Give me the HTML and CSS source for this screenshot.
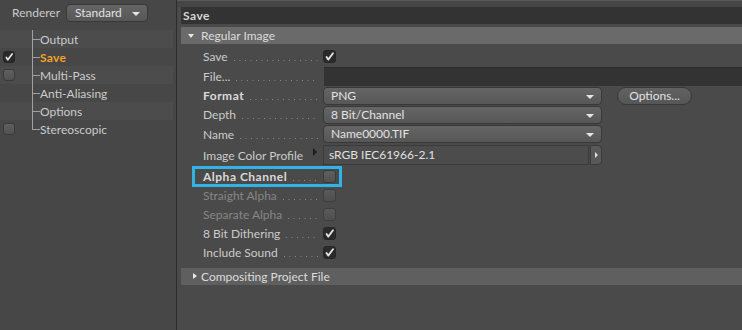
FILE: index.html
```html
<!DOCTYPE html>
<html lang="en">
<head>
    <meta charset="UTF-8">
    <title>Render Settings - Save</title>
    <link rel="stylesheet" href="styles.css">
</head>
<body>
    <div class="app">
        <aside class="sidebar">
            <div class="renderer">
                <span class="renderer-label">Renderer</span>
                <div class="select select-small">Standard</div>
            </div>
            <ul class="tree">
                <li class="tree-row alt"><span class="cb-cell"></span><span class="branch"></span><span class="tree-label">Output</span></li>
                <li class="tree-row"><span class="cb-cell"><span class="check on"><svg viewBox="0 0 12 12"><path d="M2.8 6.6 L4.6 9.4 L9.8 2.4"/></svg></span></span><span class="branch"></span><span class="tree-label active">Save</span></li>
                <li class="tree-row alt"><span class="cb-cell"><span class="check"></span></span><span class="branch"></span><span class="tree-label">Multi-Pass</span></li>
                <li class="tree-row"><span class="cb-cell"></span><span class="branch"></span><span class="tree-label">Anti-Aliasing</span></li>
                <li class="tree-row alt"><span class="cb-cell"></span><span class="branch"></span><span class="tree-label">Options</span></li>
                <li class="tree-row last"><span class="cb-cell"><span class="check"></span></span><span class="branch"></span><span class="tree-label">Stereoscopic</span></li>
            </ul>
        </aside>

        <main class="panel">
            <div class="panel-top"></div>
            <div class="panel-title">Save</div>

            <div class="group-head open">Regular Image</div>
            <div class="props">
                <div class="prop h19">
                    <div class="prop-label"><span>Save</span><span class="dots"></span></div>
                    <span class="check big on"><svg viewBox="0 0 12 12"><path d="M2.8 6.6 L4.6 9.4 L9.8 2.4"/></svg></span>
                </div>
                <div class="prop h20">
                    <div class="prop-label"><span>File...</span><span class="dots"></span></div>
                    <div class="file-field"></div>
                </div>
                <div class="prop h19">
                    <div class="prop-label strong"><span>Format</span><span class="dots"></span></div>
                    <div class="select">PNG</div>
                    <button class="pill">Options...</button>
                </div>
                <div class="prop h19">
                    <div class="prop-label"><span>Depth</span><span class="dots"></span></div>
                    <div class="select">8 Bit/Channel</div>
                </div>
                <div class="prop h20">
                    <div class="prop-label"><span>Name</span><span class="dots"></span></div>
                    <div class="select">Name0000.TIF</div>
                </div>
                <div class="prop h22">
                    <div class="prop-label"><span>Image Color Profile</span><span class="spacer"></span><span class="marker"></span></div>
                    <div class="profile-field">sRGB IEC61966-2.1</div>
                    <span class="profile-btn"></span>
                </div>
                <div class="prop h20 highlighted">
                    <div class="prop-label strong"><span>Alpha Channel</span><span class="dots"></span></div>
                    <span class="check big"></span>
                    <span class="highlight-box"></span>
                </div>
                <div class="prop h19 disabled">
                    <div class="prop-label"><span>Straight Alpha</span><span class="dots"></span></div>
                    <span class="check big"></span>
                </div>
                <div class="prop h19 disabled">
                    <div class="prop-label"><span>Separate Alpha</span><span class="dots"></span></div>
                    <span class="check big"></span>
                </div>
                <div class="prop h19">
                    <div class="prop-label"><span>8 Bit Dithering</span><span class="dots"></span></div>
                    <span class="check big on"><svg viewBox="0 0 12 12"><path d="M2.8 6.6 L4.6 9.4 L9.8 2.4"/></svg></span>
                </div>
                <div class="prop h19">
                    <div class="prop-label"><span>Include Sound</span><span class="dots"></span></div>
                    <span class="check big on"><svg viewBox="0 0 12 12"><path d="M2.8 6.6 L4.6 9.4 L9.8 2.4"/></svg></span>
                </div>
            </div>

            <div class="group-head closed">Compositing Project File</div>
        </main>
    </div>
</body>
</html>
```

FILE: styles.css
```css
body {
    margin: 0;
    background: #4a4a4a;
    font-family: Lato, "Noto Sans", sans-serif;
    font-size: 12px;
    color: #cbcbcb;
}
.app {
    display: flex;
    height: 330px;
}

/* left tree */
.sidebar {
    width: 176px;
    background: #474747;
    border-right: 1px solid #2c2c2c;
    flex-shrink: 0;
}
.renderer {
    height: 30px;
    box-sizing: border-box;
    padding: 4px 0 0 12px;
    display: flex;
    align-items: flex-start;
}
.renderer-label {
    width: 54px;
    line-height: 18px;
}
.select {
    position: relative;
    width: 279px;
    height: 18px;
    box-sizing: border-box;
    padding-left: 7px;
    line-height: 16px;
    border: 1px solid #383838;
    border-radius: 4px;
    background: linear-gradient(#656565, #575757);
    color: #e2e2e2;
}
.select::after {
    content: "";
    position: absolute;
    right: 7px;
    top: 7px;
    border-left: 4px solid transparent;
    border-right: 4px solid transparent;
    border-top: 4px solid #e6e6e6;
}
.select-small {
    width: 82px;
    padding-left: 8px;
}
.tree {
    list-style: none;
    margin: 0;
    padding: 0;
    width: 173px;
}
.tree-row {
    height: 18px;
    display: flex;
    align-items: center;
}
.tree-row.alt {
    background: #4c4c4c;
}
.cb-cell {
    width: 32px;
    padding-left: 3px;
    box-sizing: border-box;
    display: flex;
}
.branch {
    position: relative;
    width: 8px;
    align-self: stretch;
}
.branch::before {
    content: "";
    position: absolute;
    left: 0;
    top: 0;
    bottom: 0;
    border-left: 1px solid #a0a0a0;
}
.tree-row.last .branch::before {
    bottom: 50%;
}
.branch::after {
    content: "";
    position: absolute;
    left: 0;
    top: 50%;
    width: 8px;
    border-top: 1px solid #a0a0a0;
}
.tree-label.active {
    color: #f3a22a;
    font-weight: bold;
    letter-spacing: 0.3px;
}

/* checkboxes */
.check {
    width: 12px;
    height: 12px;
    box-sizing: border-box;
    border: 1px solid #3a3a3a;
    border-radius: 3px;
    background: linear-gradient(#606060, #515151);
    display: flex;
}
.check.big {
    width: 13px;
    height: 13px;
}
.check.on {
    background: #2a2a2a;
    border-color: #262626;
}
.check svg {
    width: 100%;
    height: 100%;
}
.check path {
    fill: none;
    stroke: #e4e4e4;
    stroke-width: 2;
    stroke-linecap: round;
    stroke-linejoin: round;
}

/* right panel */
.panel {
    flex: 1;
    padding-left: 4px;
    background: #4a4a4a;
}
.panel-top {
    height: 7px;
    box-sizing: border-box;
    border-top: 1px solid #5a5a5a;
    background: #464646;
    margin-left: -4px;
}
.panel-title {
    height: 17px;
    line-height: 17px;
    padding-left: 2px;
    background: #333;
    font-weight: bold;
    letter-spacing: 0.5px;
    color: #d6d6d6;
}
.group-head {
    position: relative;
    height: 17px;
    line-height: 17px;
    margin-top: 3px;
    padding-left: 20px;
    background: #6a6a6a;
    color: #dcdcdc;
}
.group-head.open::before {
    content: "";
    position: absolute;
    left: 7px;
    top: 7px;
    border-left: 3.5px solid transparent;
    border-right: 3.5px solid transparent;
    border-top: 4px solid #e8e8e8;
}
.group-head.closed {
    margin-top: 6px;
    background: #5f5f5f;
}
.group-head.closed::before {
    content: "";
    position: absolute;
    left: 12px;
    top: 5px;
    border-top: 3.5px solid transparent;
    border-bottom: 3.5px solid transparent;
    border-left: 4px solid #e8e8e8;
}

.props {
    margin-top: 3px;
    padding-left: 22px;
}
.prop {
    position: relative;
    display: flex;
    align-items: center;
}
.h19 { height: 19px; }
.h20 { height: 20px; }
.h22 { height: 22px; }
.prop-label {
    width: 115px;
    margin-right: 5px;
    display: flex;
    align-items: baseline;
    white-space: nowrap;
}
.prop-label.strong {
    font-weight: bold;
    letter-spacing: 0.5px;
    color: #dadada;
}
.dots {
    flex: 1;
    height: 1px;
    margin-left: 6px;
    background: linear-gradient(to right, #8c8c8c 0 1px, transparent 1px 100%) 0 0 / 5.5px 1px repeat-x;
}
.spacer {
    flex: 1;
}
.marker {
    align-self: center;
    margin-top: -6px;
    margin-right: 1px;
    border-top: 4px solid transparent;
    border-bottom: 4px solid transparent;
    border-left: 4px solid #1c1c1c;
}
.disabled .prop-label {
    color: #868686;
}
.disabled .check {
    opacity: 0.75;
}

.file-field {
    flex: 1;
    height: 19px;
    margin-left: 1px;
    background: #333;
    border-top: 1px solid #2a2a2a;
    box-sizing: border-box;
}
.pill {
    margin-left: 15px;
    width: 75px;
    height: 18px;
    padding: 0;
    border: 1px solid #383838;
    border-radius: 9px;
    background: linear-gradient(#626262, #565656);
    color: #e2e2e2;
    font: inherit;
}
.profile-field {
    width: 266px;
    height: 20px;
    box-sizing: border-box;
    padding-left: 5px;
    line-height: 18px;
    border: 1px solid #3a3a3a;
    background: #4c4c4c;
    color: #e0e0e0;
}
.profile-btn {
    position: relative;
    width: 12px;
    height: 20px;
    margin-left: 1px;
    box-sizing: border-box;
    border: 1px solid #3a3a3a;
    border-radius: 0 4px 4px 0;
    background: #595959;
}
.profile-btn::after {
    content: "";
    position: absolute;
    left: 4px;
    top: 6px;
    border-top: 3px solid transparent;
    border-bottom: 3px solid transparent;
    border-left: 3px solid #e0e0e0;
}
.highlight-box {
    position: absolute;
    left: -11px;
    top: 0;
    width: 150px;
    height: 21px;
    box-sizing: border-box;
    border: 3px solid #31b3e4;
}
```
